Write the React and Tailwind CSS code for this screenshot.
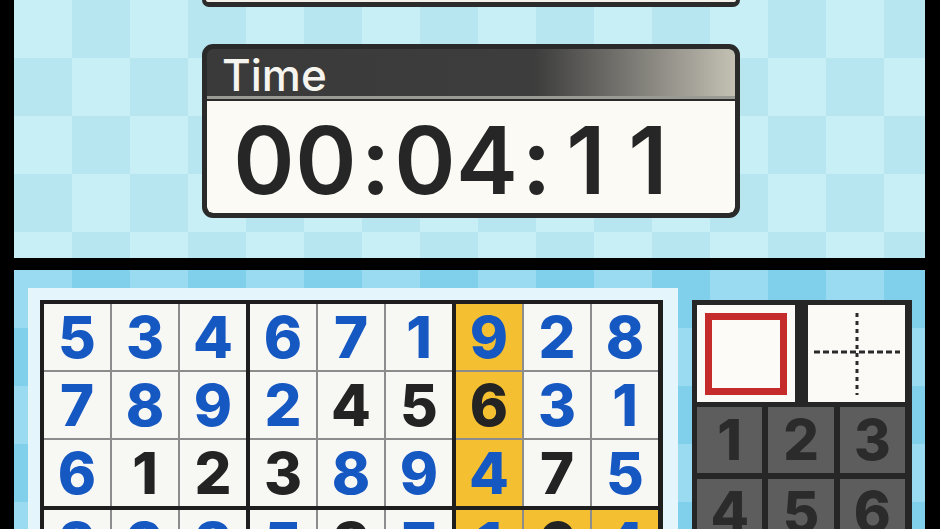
const rows = [
  "534671928",
  "789245631",
  "612389475",
  "298537164",
  "000000000",
  "000000000",
];

// b = blue (player), k = black (given)
const inks = [
  "bbbbbbbbb",
  "bbbbkkkbb",
  "bkkkbbbkb",
  "bbbbkbbkb",
  "bbbbbbbbb",
  "bbbbbbbbb",
];

function Cell({ r, c }) {
  const v = rows[r][c];
  const yellow = c === 6 || (r >= 3 && r <= 5 && c >= 6);
  const ink = inks[r][c] === "b" ? "text-[#1658c2]" : "text-[#232323]";
  return (
    <div
      className={`h-[66px] w-[66px] flex items-center justify-center text-[58px] font-extrabold leading-none font-['Inter',sans-serif] ${
        yellow ? "bg-[#f4c032]" : "bg-[#f7f7f4]"
      } ${ink}`}
    >
      {v !== "0" ? v : ""}
    </div>
  );
}

function Box({ br, bc }) {
  const cells = [];
  for (let r = 0; r < 3; r++)
    for (let c = 0; c < 3; c++)
      cells.push(<Cell key={`${r}${c}`} r={br * 3 + r} c={bc * 3 + c} />);
  return <div className="grid grid-cols-3 gap-[2px] bg-[#8c8c8c]">{cells}</div>;
}

function Board() {
  return (
    <div className="bg-[#e4f6fb] p-[12px] pr-[15px] shrink-0">
      <div className="grid grid-cols-3 gap-[4px] bg-[#1e1e1e] p-[4px] pr-[5px]">
        {[0, 1].map((br) =>
          [0, 1, 2].map((bc) => <Box key={`${br}${bc}`} br={br} bc={bc} />)
        )}
      </div>
    </div>
  );
}

function Pad() {
  return (
    <div className="mt-[12px] w-[220px] bg-[#262626] p-[5px] pr-[7px] shrink-0">
      <div className="flex gap-[13px]">
        <div className="h-[97px] w-[98px] bg-[#fbfaf6] flex items-center justify-center">
          <div className="h-[82px] w-[82px] border-[7px] border-[#c52b2b] bg-[#fdfbf7]" />
        </div>
        <div className="h-[97px] w-[97px] bg-[#fbfaf6] flex items-center justify-center">
          <svg width="97" height="97" viewBox="0 0 97 97">
            <line x1="49" y1="8" x2="49" y2="90" stroke="#2a2a2a" strokeWidth="3" strokeDasharray="4 4" />
            <line x1="6" y1="47" x2="92" y2="47" stroke="#2a2a2a" strokeWidth="3" strokeDasharray="6 3" />
          </svg>
        </div>
      </div>
      <div className="mt-[5px] grid grid-cols-3 gap-[6px]">
        {["1", "2", "3", "4", "5", "6", "7", "8", "9"].map((n) => (
          <div
            key={n}
            className="h-[66px] bg-[#5d5d5d] flex items-center justify-center text-[56px] font-extrabold leading-none text-[#2b2b2b] font-['Inter',sans-serif]"
          >
            {n}
          </div>
        ))}
      </div>
    </div>
  );
}

function Clock({ value }) {
  return (
    <div className="flex items-center text-[93px] leading-none text-[#262626] font-['Inter',sans-serif] font-semibold">
      {value.split("").map((ch, i) => (
        <span
          key={i}
          className={`inline-block text-center ${ch === ":" ? "w-[37px]" : "w-[62px]"}`}
        >
          {ch}
        </span>
      ))}
    </div>
  );
}

export default function App() {
  return (
    <div className="w-[940px] h-[529px] bg-black overflow-hidden flex flex-col pl-[14px] pr-[15px]">
      {/* top screen */}
      <div className="h-[258px] shrink-0 overflow-hidden bg-[#bfe9f3] bg-[repeating-conic-gradient(#b7e6f1_0_25%,#c8eef6_0_50%)] bg-[length:116px_116px] pl-[188px]">
        <div className="h-[7px] w-[538px] rounded-b-[8px] border-x-[4px] border-b-[5px] border-[#2b2b2b] bg-[#f3f1ea]" />
        <div className="mt-[37px] w-[538px] h-[174px] rounded-[11px] border-[5px] border-[#2a2a2a] bg-[#2a2a2a] flex flex-col overflow-hidden">
          <div className="h-[50px] shrink-0 rounded-t-[6px] bg-gradient-to-r from-[#3a3a3a] via-[#3d3d3d] via-62% to-[#c4c1b4] flex items-center pl-[15px] border-b-[3px] border-[#9a9a95]">
            <span className="text-[44px] leading-none text-[#f6f4ee] font-['Inter',sans-serif] font-medium mt-[4px]">
              Time
            </span>
          </div>
          <div className="flex-1 mt-[2px] rounded-b-[6px] bg-[#fbfaf5] flex items-center pl-[26px] pt-[6px]">
            <Clock value="00:04:11" />
          </div>
        </div>
      </div>
      {/* bottom screen */}
      <div className="mt-[12px] flex-1 overflow-hidden bg-[#8bd4ee] bg-[repeating-conic-gradient(#80cfeb_0_25%,#9adbf1_0_50%)] bg-[length:116px_116px] pt-[18px] pl-[14px] flex gap-[14px]">
        <Board />
        <Pad />
      </div>
    </div>
  );
}
